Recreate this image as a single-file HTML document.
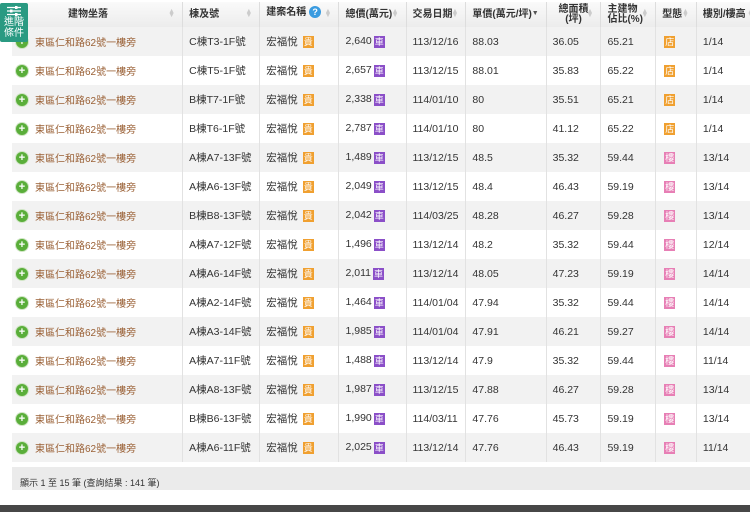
<!DOCTYPE html>
<html><head><meta charset="utf-8"><style>
*{margin:0;padding:0;box-sizing:border-box}
body{width:750px;height:512px;background:#fff;position:relative;overflow:hidden;font-family:"Liberation Sans","Noto Sans CJK TC",sans-serif;font-size:10.5px;color:#333}
table{position:absolute;left:12px;top:2px;border-collapse:collapse;table-layout:fixed;width:750px}
th{height:25px;background:linear-gradient(#fafafa,#ececec);font-size:10px;font-weight:bold;color:#333;border-right:1px solid #ddd;text-align:left;padding-left:6px;position:relative;line-height:10px}
th .s{position:absolute;right:7px;top:8px;color:#ccc;font-size:7px;line-height:4px}
td{height:29px;border-right:1px solid #e2e2e2;padding-left:6px;white-space:nowrap;font-size:10.5px;vertical-align:middle}
tr:nth-child(even) td{background:#f2f2f2}
tr:nth-child(odd) td{background:#fff}
.pl{display:inline-block;width:12px;height:12px;border-radius:50%;background:#5aae3a;color:#fff;font-weight:bold;font-size:11px;line-height:12px;text-align:center;margin-right:7px;margin-left:-2px;vertical-align:middle;box-shadow:0 0 0 1px #cfe5c4}
.ad{color:#9a6035;font-size:10px;vertical-align:middle}
.t{display:inline-block;width:11px;height:12px;color:#fff;font-size:9px;line-height:12px;text-align:center;vertical-align:middle;margin-left:2px}
.o{background:#f0a030}.p{background:#8b4fc8}.k{background:#e77fb5}
#btn{position:absolute;left:0;top:3px;width:28px;height:39px;background:#2a9a82;color:#fff;border-radius:2px;z-index:2;overflow:hidden}
#btn svg{position:absolute;left:6px;top:3px}
#btn .tx{position:absolute;left:0;top:14px;width:28px;text-align:center;font-size:10px;line-height:11px}
#ft{position:absolute;left:12px;top:467px;width:738px;height:23px;background:#ebebeb;font-size:9px;padding:12px 0 0 8px;line-height:9px}
#bar{position:absolute;left:0;top:505px;width:750px;height:7px;background:#474747}
</style></head><body>
<div id="btn"><svg width="16" height="10" viewBox="0 0 16 10"><g stroke="#fff" stroke-width="1.2"><line x1="1" y1="1.5" x2="15" y2="1.5"/><line x1="1" y1="5" x2="15" y2="5"/><line x1="1" y1="8.5" x2="15" y2="8.5"/></g><g fill="#fff"><rect x="9" y="0" width="2.5" height="3"/><rect x="4" y="3.5" width="2.5" height="3"/><rect x="9" y="7" width="2.5" height="3"/></g></svg><div class="tx">進階<br>條件</div></div>
<table>
<colgroup><col style="width:168px"><col style="width:76px"><col style="width:78px"><col style="width:66px"><col style="width:59px"><col style="width:79px"><col style="width:54px"><col style="width:54px"><col style="width:40px"><col style="width:64px"></colgroup>
<tr><th style="padding-left:56px">建物坐落<span class="s">▲<br>▼</span></th><th>棟及號<span class="s">▲<br>▼</span></th><th style="vertical-align:top;padding-top:4px">建案名稱 <span style="display:inline-block;width:12px;height:12px;border-radius:50%;background:#3a9be0;color:#fff;text-align:center;line-height:12px;font-size:9px">?</span><span class="s">▲<br>▼</span></th><th>總價(萬元)<span class="s">▲<br>▼</span></th><th>交易日期<span class="s">▲<br>▼</span></th><th>單價(萬元/坪)<span class="s" style="color:#555;top:10px">▼</span></th><th style="text-align:center;padding-left:0">總面積<br>(坪)<span class="s">▲<br>▼</span></th><th>主建物<br>佔比(%)<span class="s">▲<br>▼</span></th><th>型態<span class="s">▲<br>▼</span></th><th>樓別/樓高<span class="s">▲<br>▼</span></th></tr>
<tr><td><span class="pl">+</span><span class="ad">東區仁和路62號一樓旁</span></td><td>C棟T3-1F號</td><td>宏福悅 <span class="t o">貴</span></td><td>2,640<span class="t p">車</span></td><td>113/12/16</td><td>88.03</td><td>36.05</td><td>65.21</td><td><span class="t o">店</span></td><td>1/14</td></tr>
<tr><td><span class="pl">+</span><span class="ad">東區仁和路62號一樓旁</span></td><td>C棟T5-1F號</td><td>宏福悅 <span class="t o">貴</span></td><td>2,657<span class="t p">車</span></td><td>113/12/15</td><td>88.01</td><td>35.83</td><td>65.22</td><td><span class="t o">店</span></td><td>1/14</td></tr>
<tr><td><span class="pl">+</span><span class="ad">東區仁和路62號一樓旁</span></td><td>B棟T7-1F號</td><td>宏福悅 <span class="t o">貴</span></td><td>2,338<span class="t p">車</span></td><td>114/01/10</td><td>80</td><td>35.51</td><td>65.21</td><td><span class="t o">店</span></td><td>1/14</td></tr>
<tr><td><span class="pl">+</span><span class="ad">東區仁和路62號一樓旁</span></td><td>B棟T6-1F號</td><td>宏福悅 <span class="t o">貴</span></td><td>2,787<span class="t p">車</span></td><td>114/01/10</td><td>80</td><td>41.12</td><td>65.22</td><td><span class="t o">店</span></td><td>1/14</td></tr>
<tr><td><span class="pl">+</span><span class="ad">東區仁和路62號一樓旁</span></td><td>A棟A7-13F號</td><td>宏福悅 <span class="t o">貴</span></td><td>1,489<span class="t p">車</span></td><td>113/12/15</td><td>48.5</td><td>35.32</td><td>59.44</td><td><span class="t k">樓</span></td><td>13/14</td></tr>
<tr><td><span class="pl">+</span><span class="ad">東區仁和路62號一樓旁</span></td><td>A棟A6-13F號</td><td>宏福悅 <span class="t o">貴</span></td><td>2,049<span class="t p">車</span></td><td>113/12/15</td><td>48.4</td><td>46.43</td><td>59.19</td><td><span class="t k">樓</span></td><td>13/14</td></tr>
<tr><td><span class="pl">+</span><span class="ad">東區仁和路62號一樓旁</span></td><td>B棟B8-13F號</td><td>宏福悅 <span class="t o">貴</span></td><td>2,042<span class="t p">車</span></td><td>114/03/25</td><td>48.28</td><td>46.27</td><td>59.28</td><td><span class="t k">樓</span></td><td>13/14</td></tr>
<tr><td><span class="pl">+</span><span class="ad">東區仁和路62號一樓旁</span></td><td>A棟A7-12F號</td><td>宏福悅 <span class="t o">貴</span></td><td>1,496<span class="t p">車</span></td><td>113/12/14</td><td>48.2</td><td>35.32</td><td>59.44</td><td><span class="t k">樓</span></td><td>12/14</td></tr>
<tr><td><span class="pl">+</span><span class="ad">東區仁和路62號一樓旁</span></td><td>A棟A6-14F號</td><td>宏福悅 <span class="t o">貴</span></td><td>2,011<span class="t p">車</span></td><td>113/12/14</td><td>48.05</td><td>47.23</td><td>59.19</td><td><span class="t k">樓</span></td><td>14/14</td></tr>
<tr><td><span class="pl">+</span><span class="ad">東區仁和路62號一樓旁</span></td><td>A棟A2-14F號</td><td>宏福悅 <span class="t o">貴</span></td><td>1,464<span class="t p">車</span></td><td>114/01/04</td><td>47.94</td><td>35.32</td><td>59.44</td><td><span class="t k">樓</span></td><td>14/14</td></tr>
<tr><td><span class="pl">+</span><span class="ad">東區仁和路62號一樓旁</span></td><td>A棟A3-14F號</td><td>宏福悅 <span class="t o">貴</span></td><td>1,985<span class="t p">車</span></td><td>114/01/04</td><td>47.91</td><td>46.21</td><td>59.27</td><td><span class="t k">樓</span></td><td>14/14</td></tr>
<tr><td><span class="pl">+</span><span class="ad">東區仁和路62號一樓旁</span></td><td>A棟A7-11F號</td><td>宏福悅 <span class="t o">貴</span></td><td>1,488<span class="t p">車</span></td><td>113/12/14</td><td>47.9</td><td>35.32</td><td>59.44</td><td><span class="t k">樓</span></td><td>11/14</td></tr>
<tr><td><span class="pl">+</span><span class="ad">東區仁和路62號一樓旁</span></td><td>A棟A8-13F號</td><td>宏福悅 <span class="t o">貴</span></td><td>1,987<span class="t p">車</span></td><td>113/12/15</td><td>47.88</td><td>46.27</td><td>59.28</td><td><span class="t k">樓</span></td><td>13/14</td></tr>
<tr><td><span class="pl">+</span><span class="ad">東區仁和路62號一樓旁</span></td><td>B棟B6-13F號</td><td>宏福悅 <span class="t o">貴</span></td><td>1,990<span class="t p">車</span></td><td>114/03/11</td><td>47.76</td><td>45.73</td><td>59.19</td><td><span class="t k">樓</span></td><td>13/14</td></tr>
<tr><td><span class="pl">+</span><span class="ad">東區仁和路62號一樓旁</span></td><td>A棟A6-11F號</td><td>宏福悅 <span class="t o">貴</span></td><td>2,025<span class="t p">車</span></td><td>113/12/14</td><td>47.76</td><td>46.43</td><td>59.19</td><td><span class="t k">樓</span></td><td>11/14</td></tr>
</table>
<div id="ft">顯示 1 至 15 筆 (查詢結果 : 141 筆)</div>
<div id="bar"></div>
</body></html>
